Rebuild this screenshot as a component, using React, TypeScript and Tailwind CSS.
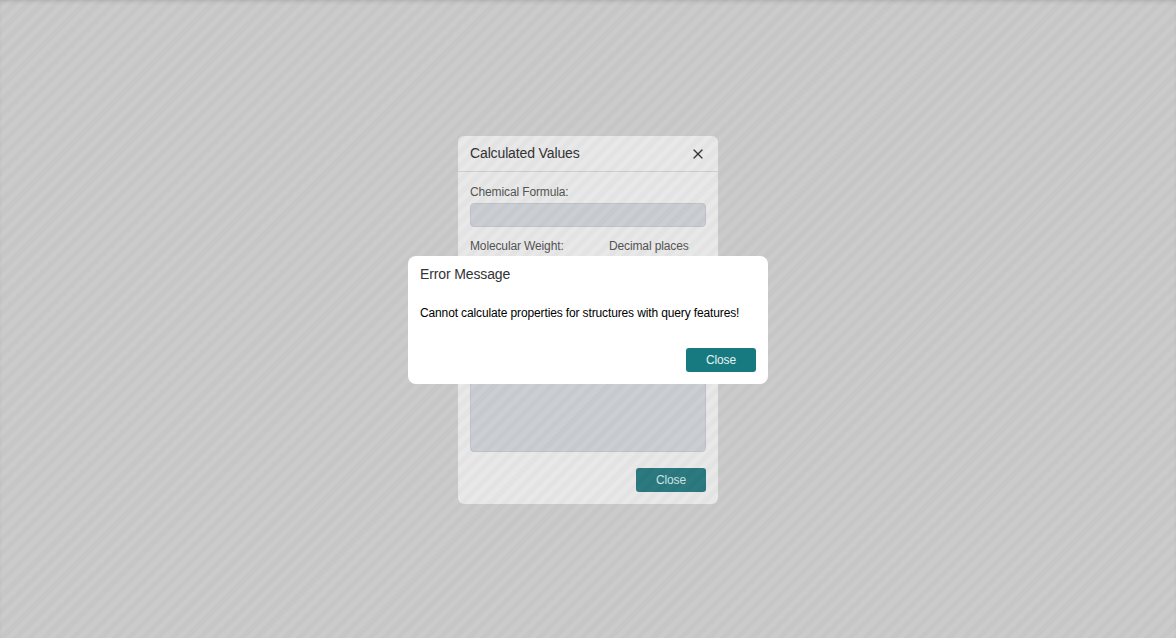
import React from 'react';
import { X } from 'lucide-react';

const font = { fontFamily: '"Liberation Sans", Arial, sans-serif', letterSpacing: '-0.13px' };

function CalculatedValuesDialog() {
  return (
    <div className="w-[260px] rounded-[6px] bg-[#e8e8e8] flex flex-col">
      <div className="h-[36px] flex items-center justify-between px-3 border-b border-[#cfcfcf]">
        <span className="text-[14px] text-[#333]">Calculated Values</span>
        <X className="w-[16px] h-[16px] text-[#333]" strokeWidth={1.8} />
      </div>
      <div className="px-3 pt-[13px] pb-3 flex flex-col">
        <label className="text-[12px] leading-[14px] text-[#555]">Chemical Formula:</label>
        <div className="mt-[4px] h-[24px] rounded-[4px] bg-[#cbced3] border border-[#bfc3c8]" />
        <div className="mt-[12px] flex text-[12px] leading-[14px] text-[#555]">
          <span className="w-[139px]">Molecular Weight:</span>
          <span>Decimal places</span>
        </div>
        <div className="mt-[4px] flex gap-2">
          <div className="flex-1 h-[24px] rounded-[4px] bg-[#cbced3] border border-[#bfc3c8]" />
          <div className="w-[96px] h-[24px] rounded-[4px] bg-[#f0f0f0] border border-[#bfc3c8]" />
        </div>
        <label className="mt-[11px] text-[12px] leading-[14px] text-[#555]">Exact Mass:</label>
        <div className="mt-[4px] h-[24px] rounded-[4px] bg-[#cbced3] border border-[#bfc3c8]" />
        <label className="mt-[11px] text-[12px] leading-[14px] text-[#555]">Elemental Analysis:</label>
        <div className="mt-[4px] h-[89px] rounded-[4px] bg-[#cbced3] border border-[#bfc3c8]" />
        <div className="mt-[16px] flex justify-end">
          <button className="w-[70px] h-[24px] rounded-[3px] bg-[#2a7a80] text-[12px] text-[#d6e4e5]">
            Close
          </button>
        </div>
      </div>
    </div>
  );
}

function ErrorDialog() {
  return (
    <div className="w-[360px] h-[128px] rounded-[8px] bg-white flex flex-col px-3">
      <div className="pt-[10px] text-[14px] leading-[16px] text-[#333]">Error Message</div>
      <div className="mt-[24px] text-[12px] leading-[14px] text-black">
        Cannot calculate properties for structures with query features!
      </div>
      <div className="mt-auto mb-3 flex justify-end">
        <button className="w-[70px] h-[24px] rounded-[3px] bg-[#167a80] text-[12px] text-[#e8f2f3]">
          Close
        </button>
      </div>
    </div>
  );
}

export default function App() {
  return (
    <div
      className="relative w-[1176px] h-[638px] overflow-hidden bg-[#cbcbcb] flex flex-col items-center pt-[136px]"
      style={font}
    >
      <CalculatedValuesDialog />
      {/* striped overlay */}
      <div className="absolute inset-0 bg-[repeating-linear-gradient(135deg,rgba(0,0,0,0.025)_0px,rgba(0,0,0,0.025)_5px,transparent_5px,transparent_10px)] shadow-[inset_0_3px_4px_-2px_rgba(0,0,0,0.15)]" />
      <div className="absolute inset-0 flex flex-col items-center pt-[256px]">
        <ErrorDialog />
      </div>
    </div>
  );
}
